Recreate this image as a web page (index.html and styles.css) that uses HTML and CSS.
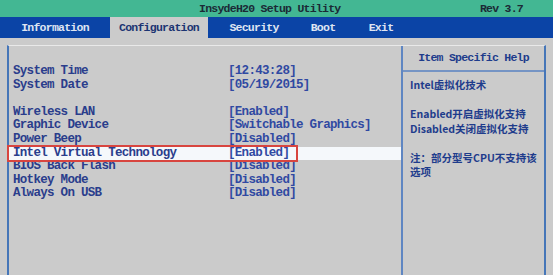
FILE: index.html
```html
<!DOCTYPE html>
<html lang="zh-CN">

<head>
	<meta charset="utf-8" />
	<meta name="viewport" content="width=device-width, initial-scale=1" />
	<title>InsydeH20 Setup Utility</title>
	<link rel="stylesheet" href="styles.css">
</head>

<body>
	<header class="title-bar">
		<div class="title">InsydeH20 Setup Utility</div>
		<div class="rev">Rev 3.7</div>
	</header>

	<nav class="tabs">
		<div class="tab tab-info">Information</div>
		<div class="tab tab-config active">Configuration</div>
		<div class="tab tab-security">Security</div>
		<div class="tab tab-boot">Boot</div>
		<div class="tab tab-exit">Exit</div>
	</nav>

	<main class="panel">
		<section class="settings">
			<div class="group">
				<div class="row"><span class="label">System Time</span><span class="value">[12:43:28]</span></div>
				<div class="row"><span class="label">System Date</span><span class="value">[05/19/2015]</span></div>
			</div>
			<div class="group">
				<div class="row"><span class="label">Wireless LAN</span><span class="value">[Enabled]</span></div>
				<div class="row"><span class="label">Graphic Device</span><span class="value">[Switchable Graphics]</span></div>
				<div class="row"><span class="label">Power Beep</span><span class="value">[Disabled]</span></div>
				<div class="row selected"><span class="label">Intel Virtual Technology</span><span class="value">[Enabled]</span></div>
				<div class="row"><span class="label">BIOS Back Flash</span><span class="value">[Disabled]</span></div>
				<div class="row"><span class="label">Hotkey Mode</span><span class="value">[Disabled]</span></div>
				<div class="row"><span class="label">Always On USB</span><span class="value">[Disabled]</span></div>
			</div>
		</section>

		<aside class="help">
			<div class="help-title">Item Specific Help</div>
			<div class="help-body">
				<p>Intel虚拟化技术</p>
				<p>Enabled开启虚拟化支持<br>Disabled关闭虚拟化支持</p>
				<p>注：部分型号CPU不支持该选项</p>
			</div>
		</aside>
	</main>
</body>

</html>
```

FILE: styles.css
```css
body {
	margin: 0;
	width: 553px;
	height: 275px;
	overflow: hidden;
	background-color: #cbcbcb;
	font-family: "Liberation Mono", "DejaVu Sans Mono", monospace;
}
.title-bar {
	display: flex;
	align-items: center;
	height: 17px;
	background-color: #43b793;
	color: #1b2a36;
	font-weight: bold;
	font-size: 11.5px;
	letter-spacing: -0.75px;
}
.title {
	margin-left: 199px;
}
.rev {
	margin-left: auto;
	margin-right: 30px;
}
.tabs {
	display: flex;
	height: 21px;
	background-color: #0b44a6;
	color: #dfe5f2;
	font-weight: bold;
	font-size: 11.5px;
	letter-spacing: -0.75px;
	line-height: 21px;
}
.tab {
	text-align: center;
}
.tab-info {
	width: 110px;
}
.tab-config {
	width: 98px;
}
.tab-security {
	width: 92px;
}
.tab-boot {
	width: 46px;
}
.tab-exit {
	width: 70px;
}
.tab.active {
	background-color: #cbcbcb;
	color: #1c3472;
}
.panel {
	display: grid;
	grid-template-columns: 392px 1fr;
	height: 240px;
	margin: 7px 7px 0 7px;
	border-top: 1px solid #e9e9e9;
	border-left: 2px solid #4676b8;
	border-right: 2px solid #4676b8;
}
.settings {
	padding-top: 19px;
	color: #2a3d8c;
	font-size: 12.5px;
	font-weight: bold;
	letter-spacing: -0.7px;
	line-height: 13.6px;
}
.group + .group {
	margin-top: 13.6px;
}
.row {
	display: flex;
	padding-left: 4px;
	white-space: pre;
}
.label {
	width: 215px;
}
.value {
	color: #3049a2;
}
.row.selected {
	position: relative;
	background-color: #f5f8fb;
}
.row.selected::after {
	content: "";
	position: absolute;
	left: -2px;
	top: -2px;
	bottom: -2px;
	width: 287px;
	border: 2px solid #d8453f;
}
.help {
	border-left: 2px solid #5f86c2;
	color: #1e3c8c;
}
.help-title {
	height: 24px;
	line-height: 24px;
	text-align: center;
	font-weight: bold;
	font-size: 11.5px;
	letter-spacing: -0.75px;
	border-bottom: 2px solid #7594c4;
}
.help-body {
	padding: 6px 6px 0 7px;
	font-family: "Noto Sans CJK SC", "Noto Sans", sans-serif;
	font-weight: bold;
	font-size: 10.5px;
	line-height: 14.5px;
}
.help-body p {
	margin: 0 0 14.5px 0;
}
```
